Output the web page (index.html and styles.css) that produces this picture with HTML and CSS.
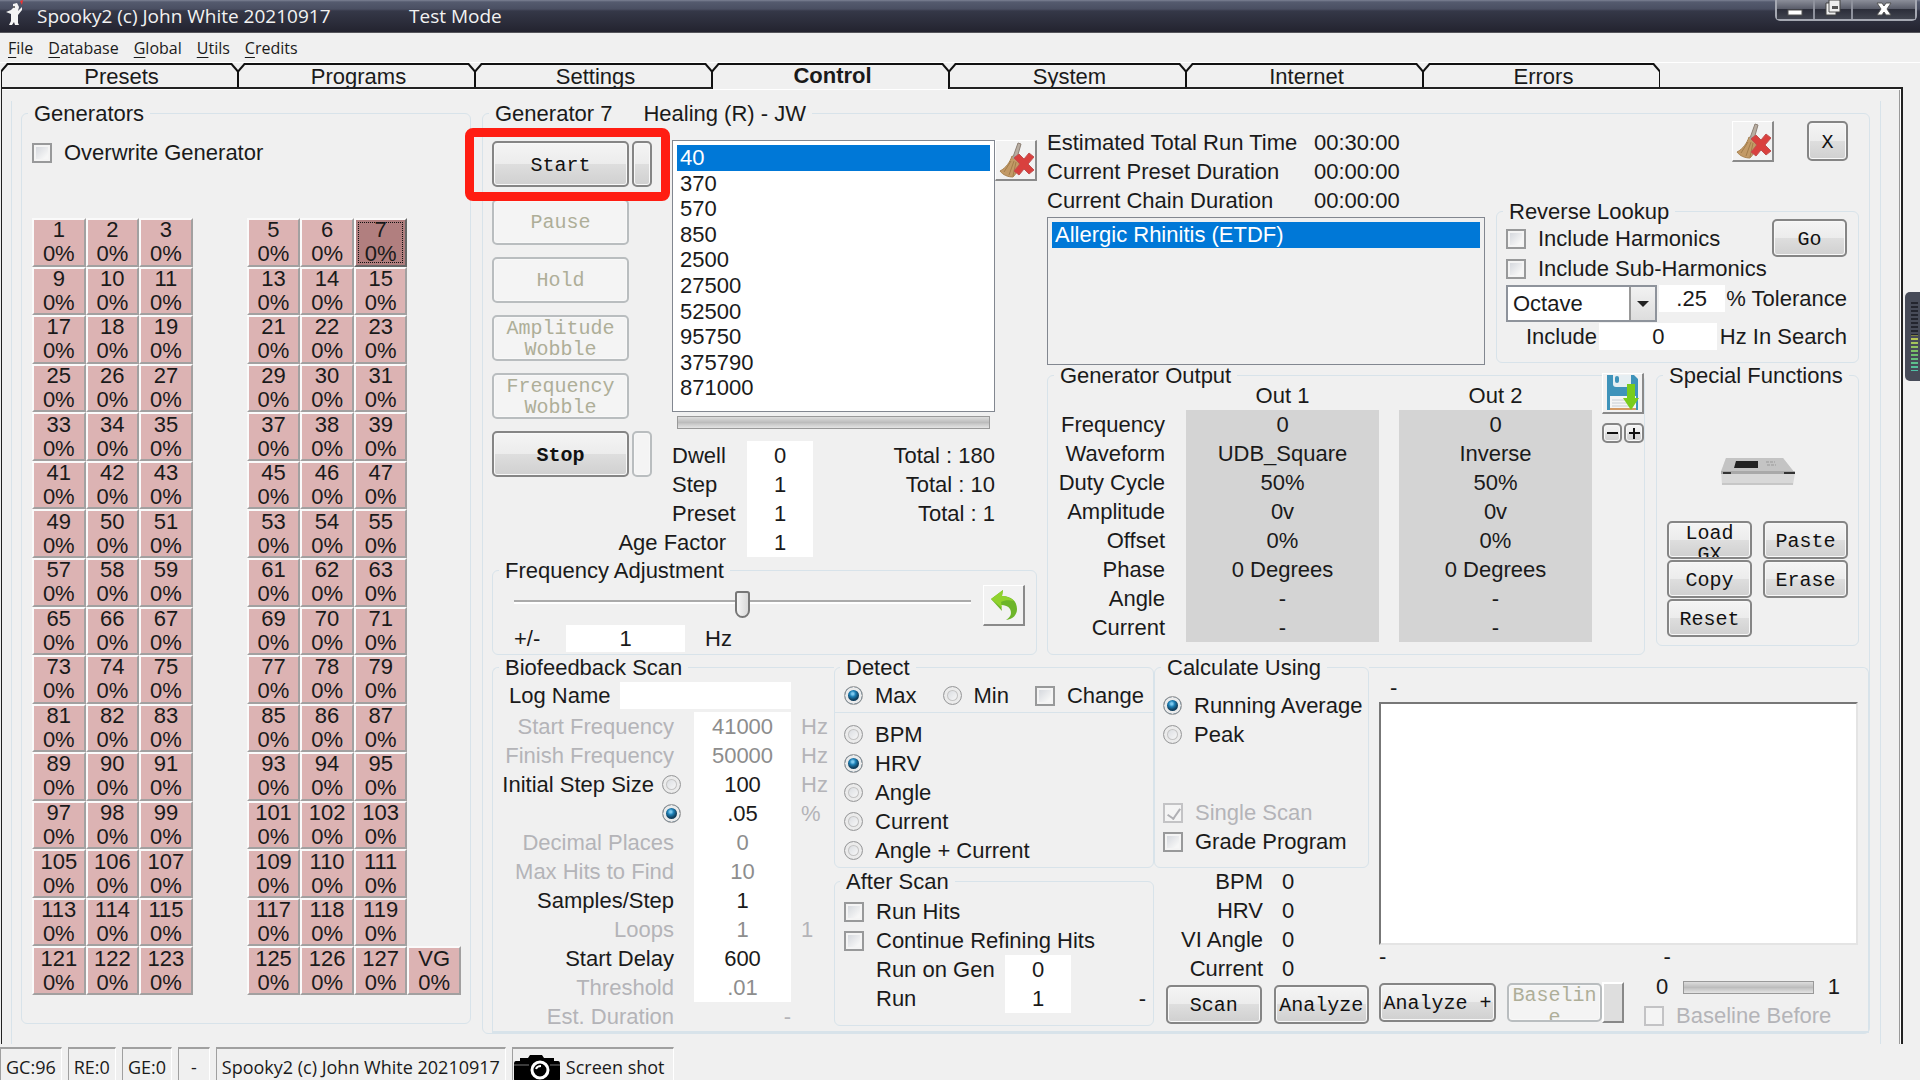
FILE: index.html
```html
<!DOCTYPE html>
<html lang="en">
<head>
<meta charset="utf-8">
<title>Spooky2 (c) John White 20210917</title>
<link rel="stylesheet" href="styles.css">
</head>
<body>
<svg class="defs" aria-hidden="true">
  <symbol id="broom" viewBox="0 0 36 36">
    <path d="M20 1l3 1-4 14-4-1z" fill="#b9aea2" stroke="#8d8176" stroke-width="1"/>
    <path d="M14 14l7 3c1 6-1 13-6 18-5 0-10-2-13-6 6-3 10-9 12-15z" fill="#c39a66" stroke="#a98453" stroke-width="1"/>
    <path d="M13 19l-7 11M16 19l-5 14M18 20l-3 14" stroke="#a37d4b" stroke-width="1" fill="none"/>
    <path d="M16 13l6 3-1 3-7-3z" fill="#a3a09c"/>
    <path d="M17 15l4-3 5 5 5-6 5 4-6 7 6 6-5 4-5-5-5 6-5-4 6-7-6-6z" fill="#d9403e" stroke="#c05050" stroke-width="1"/>
  </symbol>
</svg>

<header class="titlebar">
  <svg class="mascot" viewBox="0 0 18 26" aria-hidden="true">
    <path d="M7 4l4-1 2 4-1 4 4-4v3l-4 5v8l1 2H9l-1-3-2 3H3l2-4v-7l-5-2 5-2 2-2z" fill="#f4f4f4"/>
    <path d="M14 1l3-1-1 5z" fill="#e33"/>
    <circle cx="8" cy="7" r="1" fill="#444"/>
  </svg>
  <span class="title-name">Spooky2 (c) John White 20210917</span>
  <span>Test Mode</span>
  <div class="window-buttons">
    <button aria-label="Minimize"><svg width="16" height="18" viewBox="0 0 16 18"><rect x="1" y="10" width="14" height="5" fill="#fff" stroke="#555"/></svg></button>
    <button aria-label="Restore"><svg width="18" height="18" viewBox="0 0 18 18"><path d="M5 0h11v12h-4v3H2V3h3z" fill="#eee" stroke="#444"/><rect x="8" y="6" width="6" height="3" fill="#555"/><path d="M5 3v9h7" stroke="#555" fill="none"/></svg></button>
    <button class="wide" aria-label="Close"><svg width="16" height="18" viewBox="0 0 16 18"><path d="M1 3h5l2 3 2-3h5l-4 6 4 6h-5l-2-3-2 3H1l4-6z" fill="#fff" stroke="#555"/></svg></button>
  </div>
</header>

<nav class="menu">
  <a href="#"><u>F</u>ile</a><a href="#"><u>D</u>atabase</a><a href="#"><u>G</u>lobal</a><a href="#"><u>U</u>tils</a><a href="#"><u>C</u>redits</a>
</nav>

<div class="tabs" role="tablist">
  <button role="tab">Presets</button><button role="tab">Programs</button><button role="tab">Settings</button><button role="tab" class="active" aria-selected="true">Control</button><button role="tab">System</button><button role="tab">Internet</button><button role="tab">Errors</button>
</div>

<main class="panel">
 <div class="frame">
  <fieldset class="generators">
    <legend>Generators</legend>
    <label class="check"><input type="checkbox">Overwrite Generator</label>
    <div class="banks">
      <div class="bank bank-left" id="bank-left"></div>
      <div class="bank bank-right" id="bank-right"></div>
    </div>
  </fieldset>

  <fieldset class="control">
    <legend><span>Generator 7</span><span>Healing (R) - JW</span></legend>

    <div class="upper">
      <div class="run">
        <div class="run-row">
          <div class="actions">
            <div class="pair"><button class="btn">Start</button><button class="btn side" aria-label="Start all"></button>
              <div class="highlight"></div></div>
            <div class="pair"><button class="btn" disabled>Pause</button></div>
            <div class="pair"><button class="btn" disabled>Hold</button></div>
            <div class="pair"><button class="btn" disabled>Amplitude<br>Wobble</button></div>
            <div class="pair"><button class="btn" disabled>Frequency<br>Wobble</button></div>
            <div class="pair"><button class="btn strong">Stop</button><button class="btn side" aria-label="Stop all" disabled></button></div>
          </div>
          <div class="queue">
            <ul class="listbox frequencies">
              <li class="selected">40</li><li>370</li><li>570</li><li>850</li><li>2500</li><li>27500</li><li>52500</li><li>95750</li><li>375790</li><li>871000</li>
            </ul>
            <div class="bar"></div>
            <div class="counters">
              <label for="dwell">Dwell</label><input id="dwell" value="0"><span>Total : 180</span>
              <label for="step">Step</label><input id="step" value="1"><span>Total : 10</span>
              <label for="preset">Preset</label><input id="preset" value="1"><span>Total : 1</span>
              <label for="age" class="end">Age Factor</label><input id="age" value="1"><span></span>
            </div>
          </div>
          <button class="tool" aria-label="Clear frequencies"><svg width="36" height="36"><use href="#broom"/></svg></button>
        </div>
        <fieldset class="adjust">
          <legend>Frequency Adjustment</legend>
          <div class="adjust-main">
            <input type="range" min="0" max="100" value="50" aria-label="Frequency adjustment">
            <div class="adjust-row"><label for="adj">+/-</label><input id="adj" value="1"><span>Hz</span></div>
          </div>
          <button class="tool" aria-label="Reset adjustment">
            <svg width="32" height="34" viewBox="0 0 32 34"><path d="M3 11L15 2l-1 6c9 0 15 5 15 13 0 6-4 10-11 11 5-3 6-7 4-11-2-3-5-4-9-4l1 6z" fill="#6db52a"/><path d="M3 11L15 2l-1 6c5 0 9 2 12 5-5-1-9-1-13 1l1 6z" fill="#90d22d"/></svg>
          </button>
        </fieldset>
      </div>

      <div class="details">
        <div class="details-top">
          <div class="program">
            <dl class="times">
              <dt>Estimated Total Run Time</dt><dd>00:30:00</dd>
              <dt>Current Preset Duration</dt><dd>00:00:00</dd>
              <dt>Current Chain Duration</dt><dd>00:00:00</dd>
            </dl>
            <ul class="listbox programs"><li class="selected">Allergic Rhinitis (ETDF)</li></ul>
          </div>
          <div class="lookup-col">
            <div class="corner">
              <button class="tool" aria-label="Clear program"><svg width="36" height="36"><use href="#broom"/></svg></button>
              <button class="btn square">X</button>
            </div>
            <fieldset class="lookup">
              <legend>Reverse Lookup</legend>
              <div class="lookup-head">
                <div>
                  <label class="check"><input type="checkbox">Include Harmonics</label>
                  <label class="check"><input type="checkbox">Include Sub-Harmonics</label>
                </div>
                <button class="btn go">Go</button>
              </div>
              <div class="lookup-row">
                <span class="select"><select aria-label="Mode"><option>Octave</option></select></span>
                <input id="tol" class="tol" value=".25"><label for="tol">% Tolerance</label>
              </div>
              <div class="lookup-row include">
                <label for="inc">Include</label><input id="inc" value="0"><span>Hz In Search</span>
              </div>
            </fieldset>
          </div>
        </div>
        <div class="details-bottom">
          <fieldset class="output">
            <legend>Generator Output</legend>
            <table>
              <thead><tr><th></th><th>Out 1</th><th class="gap"></th><th>Out 2</th></tr></thead>
              <tbody>
                <tr><th>Frequency</th><td>0</td><td class="gap"></td><td>0</td></tr>
                <tr><th>Waveform</th><td>UDB_Square</td><td class="gap"></td><td>Inverse</td></tr>
                <tr><th>Duty Cycle</th><td>50%</td><td class="gap"></td><td>50%</td></tr>
                <tr><th>Amplitude</th><td>0v</td><td class="gap"></td><td>0v</td></tr>
                <tr><th>Offset</th><td>0%</td><td class="gap"></td><td>0%</td></tr>
                <tr><th>Phase</th><td>0 Degrees</td><td class="gap"></td><td>0 Degrees</td></tr>
                <tr><th>Angle</th><td>-</td><td class="gap"></td><td>-</td></tr>
                <tr><th>Current</th><td>-</td><td class="gap"></td><td>-</td></tr>
              </tbody>
            </table>
            <div class="output-tools">
              <button class="tool" aria-label="Save">
                <svg width="36" height="36" viewBox="0 0 36 36"><path d="M2 0h27l4 4v31H2z" fill="#3f93ba"/><path d="M8 0h18v9q0 3-3 3H11q-3 0-3-3z" fill="#e6eef2"/><rect x="10" y="1" width="4" height="7" rx="2" fill="#3f93ba"/><path d="M5 21h26v13H5z" fill="#f5f5f5"/><path d="M7 25h20M7 28h20M7 31h20" stroke="#c9ced3"/><path d="M5 34h26" stroke="#d49a63" stroke-width="2"/><path d="M22 9h8v14h4l-8 12-8-12h4z" fill="#79cc1c"/></svg>
              </button>
              <div class="zoomers"><button class="btn" aria-label="Less"><svg width="13" height="13"><path d="M1 6h11" stroke="#111" stroke-width="2"/></svg></button><button class="btn" aria-label="More"><svg width="13" height="13"><path d="M1 6h11M6 1v11" stroke="#111" stroke-width="2"/></svg></button></div>
            </div>
          </fieldset>
          <fieldset class="special">
            <legend>Special Functions</legend>
            <svg class="device" width="76" height="28" viewBox="0 0 76 28" aria-hidden="true"><path d="M6 0h57l12 15-2 12H2L1 13z" fill="#d8d8d8"/><path d="M6 0h57l11 14H1z" fill="#c4c4c4"/><path d="M16 3h22v7H14z" fill="#222"/><path d="M1 13h74l-1 3H1z" fill="#a9a9a9"/><path d="M3 15h8M64 15h11" stroke="#333" stroke-width="2"/><path d="M46 4h9M47 7h9" stroke="#999" stroke-dasharray="3 1"/><path d="M2 26h71" stroke="#b5b5b5"/></svg>
            <div class="special-grid">
              <button class="btn clip">Load GX</button><button class="btn">Paste</button>
              <button class="btn">Copy</button><button class="btn">Erase</button>
              <button class="btn">Reset</button>
            </div>
          </fieldset>
        </div>
      </div>
    </div>

    <div class="scan">
      <fieldset class="bio">
        <legend>Biofeedback Scan</legend>
        <div class="log"><label for="log">Log Name</label><input id="log"></div>
        <div class="params">
          <label class="off" for="p1">Start Frequency</label><input id="p1" value="41000" disabled><span class="off">Hz</span>
          <label class="off" for="p2">Finish Frequency</label><input id="p2" value="50000" disabled><span class="off">Hz</span>
          <span class="with-radio"><label for="p3">Initial Step Size</label><input type="radio" name="stepkind" aria-label="Step in Hz"></span><input id="p3" value="100"><span class="off">Hz</span>
          <span class="with-radio"><input type="radio" name="stepkind" aria-label="Step in percent" checked></span><input aria-label="Step percent" value=".05"><span class="off">%</span>
          <label class="off" for="p5">Decimal Places</label><input id="p5" value="0" disabled><span></span>
          <label class="off" for="p6">Max Hits to Find</label><input id="p6" value="10" disabled><span></span>
          <label for="p7">Samples/Step</label><input id="p7" value="1"><span></span>
          <label class="off" for="p8">Loops</label><input id="p8" value="1" disabled><span class="off">1</span>
          <label for="p9">Start Delay</label><input id="p9" value="600"><span></span>
          <label class="off" for="p10">Threshold</label><input id="p10" value=".01" disabled><span></span>
          <span class="caption off">Est. Duration</span><span class="duration off">-</span><span></span>
        </div>
      </fieldset>

      <div class="detect-col">
        <fieldset class="detect">
          <legend>Detect</legend>
          <div class="extremes">
            <label class="check"><input type="radio" name="extreme" checked>Max</label>
            <label class="check"><input type="radio" name="extreme">Min</label>
            <label class="check"><input type="checkbox">Change</label>
          </div>
          <div class="stack">
            <label class="check"><input type="radio" name="kind">BPM</label>
            <label class="check"><input type="radio" name="kind" checked>HRV</label>
            <label class="check"><input type="radio" name="kind">Angle</label>
            <label class="check"><input type="radio" name="kind">Current</label>
            <label class="check"><input type="radio" name="kind">Angle + Current</label>
          </div>
        </fieldset>
        <fieldset class="after">
          <legend>After Scan</legend>
          <label class="check"><input type="checkbox">Run Hits</label>
          <label class="check"><input type="checkbox">Continue Refining Hits</label>
          <div class="after-grid">
            <label for="rg">Run on Gen</label><input id="rg" value="0"><span></span>
            <label for="rn">Run</label><input id="rn" value="1"><span>-</span>
          </div>
        </fieldset>
      </div>

      <div class="calc-col">
        <fieldset class="calc">
          <legend>Calculate Using</legend>
          <label class="check"><input type="radio" name="calc" checked>Running Average</label>
          <label class="check"><input type="radio" name="calc">Peak</label>
          <label class="check off spaced"><input type="checkbox" checked disabled>Single Scan</label>
          <label class="check"><input type="checkbox">Grade Program</label>
        </fieldset>
        <dl class="stats">
          <dt>BPM</dt><dd>0</dd><dt>HRV</dt><dd>0</dd><dt>VI Angle</dt><dd>0</dd><dt>Current</dt><dd>0</dd>
        </dl>
        <div class="buttons"><button class="btn">Scan</button><button class="btn">Analyze</button></div>
      </div>

      <div class="chart-col">
        <div class="chart-title">-</div>
        <div class="chart"></div>
        <div class="chart-notes"><span>-</span><span>-</span></div>
        <div class="chart-foot">
          <button class="btn plus">Analyze +</button>
          <button class="btn baseline" disabled>Baseline</button>
          <button class="raised" aria-label="Baseline option"></button>
          <div class="before">
            <div class="level"><span>0</span><div class="bar"></div><span>1</span></div>
            <label class="check off"><input type="checkbox" disabled>Baseline Before</label>
          </div>
        </div>
      </div>
    </div>
  </fieldset>
 </div>
</main>

<footer class="status">
  <span>GC:96</span><span>RE:0</span><span>GE:0</span><span class="dash">-</span><span class="name">Spooky2 (c) John White 20210917</span>
  <button class="shot"><svg width="46" height="26" viewBox="0 0 46 26" aria-hidden="true"><path d="M16 0h12l2 3h10v3h4q2 0 2 3v15q0 2-2 2H2q-2 0-2-2V9q0-3 2-3h4V3h8z" fill="#000"/><path d="M0 10h15M36 10h10" stroke="#777"/><circle cx="26" cy="15" r="8" fill="#000" stroke="#fff" stroke-width="3"/><path d="M22 14q1-3 5-3" stroke="#fff" stroke-width="2" fill="none"/></svg>Screen shot</button>
</footer>

<div class="meter" aria-hidden="true"><div class="meter-bars"></div></div>
<script src="script.js"></script>
</body>
</html>
```
FILE: script.js
```js
// Fills the two generator banks, eight generators per row; the fourth column is hidden except for VG.
function addGenerator(bank, name) {
  const button = document.createElement('button');
  button.className = name === '7' ? 'gen current' : 'gen';
  button.innerHTML = name + '<br>0%';
  bank.appendChild(button);
}
const left = document.getElementById('bank-left');
const right = document.getElementById('bank-right');
for (let row = 0; row < 16; row++) {
  for (let col = 1; col <= 3; col++) {
    addGenerator(left, String(row * 8 + col));
    addGenerator(right, String(row * 8 + col + 4));
  }
  if (row < 15) right.appendChild(document.createElement('span'));
}
addGenerator(right, 'VG');
```
FILE: styles.css
```css
* { box-sizing: border-box; }
body {
  margin: 0; min-height: 100vh; display: flex; flex-direction: column;
  background: #f0f0f0; color: #1a1a1a;
  font: 22px/24px "Liberation Sans", Arial, sans-serif;
  white-space: nowrap; overflow-x: hidden;
}
button, input, select { font: inherit; color: inherit; margin: 0; padding: 0; }
button { cursor: default; }
ul, dl, dd { margin: 0; padding: 0; list-style: none; }
.defs { display: none; }
svg { display: block; flex: none; }

/* title bar */
.titlebar {
  height: 33px; display: flex; align-items: center; gap: 8px; padding-left: 6px;
  font: 19px/24px "Open Sans", "Noto Sans", sans-serif; color: #f2f2f2;
  background: linear-gradient(#7d8294 0, #545a6e 2px, #4a4f62 9px, #353848 11px, #23232f 32px, #888 33px);
}
.mascot { width: 18px; height: 26px; align-self: flex-start; }
.titlebar > span { margin-bottom: 2px; }
.title-name { margin-left: 5px; flex: 0 0 364px; }
.window-buttons { margin-left: auto; margin-right: 3px; align-self: flex-start; display: flex; border: 2px solid #a5a8b2; border-top: 0; border-radius: 0 0 5px 5px; }
.window-buttons button { width: 38px; height: 19px; border: 0; border-right: 2px solid #8f929d; background: linear-gradient(#8b8e99, #5b5e6b 45%, #2c2e3a 50%, #41444f); display: flex; justify-content: center; }
.window-buttons .wide { width: 62px; border-right: 0; }

/* menu and tabs */
.menu { height: 30px; padding: 0 8px; display: flex; align-items: center; gap: 15px; font: 16px/24px "Open Sans", "Noto Sans", sans-serif; border-bottom: 1px solid #fff; }
.menu a { color: #1a1a1a; text-decoration: none; }
.menu u { text-underline-offset: 3px; }
.tabs { display: flex; margin: 0 260px 0 1px; }
.tabs button {
  flex: 1 1 0; height: 24px; border: 0; padding: 2px 0 0 4px; background: #111; position: relative; isolation: isolate;
  clip-path: polygon(0 100%, 0 7px, 6px 0, calc(100% - 6px) 0, 100% 7px, 100% 100%);
}
.tabs button::before {
  content: ""; position: absolute; inset: 2px 1px 0; z-index: -1; background: #f0f0f0;
  clip-path: polygon(0 100%, 0 7px, 6px 0, calc(100% - 6px) 0, 100% 7px, 100% 100%);
}
.tabs .active { font-weight: bold; height: 26px; padding-top: 0; margin-bottom: -2px; z-index: 1; }

.panel { flex: 1; margin: 0 17px 3px 1px; border: solid #222; border-width: 2px 2px 0 1px; box-shadow: inset -2px 2px 0 -1px #fff, inset -2px 0 0 #999; display: flex; }
.frame { flex: 1; margin: 12px 20px 0 9px; padding: 0 11px 10px 9px; border: solid #d8e3ea; border-width: 0 1px; display: grid; grid-template-columns: 450fr 1387fr; gap: 11px; }

fieldset { margin: 0; padding: 0; min-width: 0; border: 1px solid #d8e3ea; border-radius: 6px; }
legend { margin-left: 6px; padding: 0 6px; height: 24px; line-height: 26px; }
.off { color: #b4b4b8; }

/* shared controls */
.btn {
  font: 20px/22px "Liberation Mono", "Courier New", monospace; color: #111;
  padding: 3px 0 0; border: 2px solid #858585; border-radius: 5px; overflow: hidden; white-space: normal;
  background: linear-gradient(#f4f4f4, #ececec 49%, #dedede 50%, #d0d0d0);
  box-shadow: inset 0 0 0 1px #f8f8f8;
}
.btn:disabled { color: #aeae98; border-color: #b9bdbf; background: #f4f4f4; }
.strong { font-weight: bold; }
.tool { width: 42px; height: 41px; flex: none; display: flex; align-items: center; justify-content: center; background: #f2f2f2; border: solid; border-width: 1px 2px 2px 1px; border-color: #fff #8a8a8a #8a8a8a #fff; }
.check { display: flex; align-items: center; gap: 12px; height: 29px; }
input { border: 0; border-radius: 0; outline: 0; background: #fff; text-align: center; min-width: 0; height: 27px; }
input:disabled { color: #8d8d8d; }
input[type=checkbox], input[type=radio] { appearance: none; flex: none; width: 20px; height: 20px; border: 2px solid #98999a; background: linear-gradient(135deg, #cfd3d9, #f6f6f6 75%); box-shadow: inset 0 0 0 2px #f4f4f4; }
input[type=radio] { width: 19px; height: 19px; border-radius: 50%; border-width: 1px; box-shadow: inset 0 0 0 3px #ebebeb, inset 0 0 0 4px #c4c4c4; }
input[type=radio]:checked { background: radial-gradient(circle at 45% 40%, #7cc8ee 0 1px, #1c7fb5 3px, #12405f 6px); box-shadow: inset 0 0 0 3px #ebebeb; }
input[type=checkbox]:disabled { border-color: #c3c3c5; background: #f4f4f4; }
input[type=checkbox]:disabled:checked { position: relative; }
input[type=checkbox]:disabled:checked::after { content: ""; position: absolute; left: 5px; top: 1px; width: 6px; height: 11px; border: solid #b0b0b4; border-width: 0 2px 2px 0; transform: rotate(35deg); }
.bar { height: 13px; border: 1px solid #999; background: linear-gradient(#ddd, #bcbcbc 50%, #c6c6c6 60%, #e4e4e4); }
.listbox { border: 1px solid #828790; padding: 4px; background: #fff; }
.listbox li { padding-left: 3px; line-height: 26px; }
.listbox .selected { background: #0078d7; color: #fff; }

/* generator banks */
.generators { margin-bottom: 10px; padding: 0 9px 28px 10px; display: flex; flex-direction: column; }
.generators > legend { margin-left: -4px; }
.generators > .check { height: 24px; margin: 16px 0 53px; }
.banks { flex: 1; display: flex; gap: 54px; }
.bank { display: grid; grid-auto-rows: minmax(48px, 1fr); }
.bank-left { flex: 3; grid-template-columns: repeat(3, 1fr); }
.bank-right { flex: 4; grid-template-columns: repeat(4, 1fr); }
.gen { contain: size; border: 2px solid; border-color: #fafafa #a2a0a0 #a2a0a0 #fafafa; background: #dcb3b3; line-height: 24px; padding: 0; display: flex; align-items: center; justify-content: center; text-align: center; }
.gen.current { background: #b17f7f; border-color: #fafafa #666 #666 #fafafa; outline: 1px dotted #111; outline-offset: -5px; }

/* control page */
.control { display: flex; flex-direction: column; padding-left: 9px; margin-right: -1px; }
.control > legend { margin-left: -3px; }
.control > legend span + span { margin-left: 31px; }
.upper { display: grid; grid-template-columns: 545fr 812fr; gap: 10px; margin-right: 10px; height: 530px; }
.run { display: flex; flex-direction: column; justify-content: space-between; padding-top: 15px; }
.run-row { display: flex; }
.actions { width: 160px; margin: 1px 20px 0 0; display: flex; flex-direction: column; gap: 12px; }
.pair { display: flex; gap: 3px; height: 46px; position: relative; }
.pair .btn { width: 137px; }
.pair .side { width: 20px; }
.pair .btn:disabled { line-height: 21px; padding-top: 1px; }
.highlight { position: absolute; inset: -13px -18px -14px -27px; border: 9px solid #ff1d12; border-radius: 8px; pointer-events: none; z-index: 2; }
.queue { flex: 1; display: flex; flex-direction: column; }
.frequencies { height: 272px; padding-bottom: 10px; display: grid; grid-template-rows: repeat(10, minmax(0, 1fr)); }
.queue .bar { margin: 4px 5px 12px; }
.counters { display: grid; grid-template-columns: 54px 66px 1fr; column-gap: 21px; grid-auto-rows: 29px; align-items: center; }
.counters input { height: 29px; }
.counters span { text-align: right; }
.counters .end { justify-self: end; }
.adjust { display: flex; justify-content: space-between; height: 97px; padding: 0 11px 0 21px; }
.adjust > legend { margin-left: -15px; }
.adjust-main { flex: 1; margin-right: 12px; }
.adjust-row { display: flex; align-items: center; }
.adjust-row label { width: 52px; }
.adjust-row input { width: 119px; margin-right: 20px; }
.adjust .tool { margin-top: 3px; }
input[type=range] { appearance: none; display: block; width: 100%; height: 28px; margin: 8px 0 7px; background: linear-gradient(#aaa, #aaa) 0 10px / 100% 2px no-repeat, linear-gradient(#fff, #fff) 0 12px / 100% 2px no-repeat; }
input[type=range]::-webkit-slider-thumb { appearance: none; width: 15px; height: 27px; background: linear-gradient(90deg, #f5f5f5, #d9d9d9); border: 2px solid #777; border-radius: 3px 3px 8px 8px; }

.details { display: flex; flex-direction: column; min-width: 0; }
.details-top { display: flex; gap: 11px; height: 238px; }
.program { flex: 438; display: flex; flex-direction: column; }
.times { display: grid; grid-template-columns: 267px 1fr; grid-auto-rows: 29px; align-items: center; margin: 3px 0 2px; }
.programs { flex: 1; background: #f0f0f0; margin-bottom: -2px; }
.lookup-col { flex: 363; display: flex; flex-direction: column; }
.corner { display: flex; justify-content: flex-end; gap: 33px; margin: -4px 11px 0 0; height: 78px; }
.square { width: 41px; height: 40px; }
.lookup { flex: 1; padding: 0 11px 0 9px; }
.lookup legend { margin-left: -3px; }
.lookup .check { height: 30px; }
.lookup-head { display: flex; justify-content: space-between; margin: 1px 0; }
.go { width: 75px; height: 38px; margin-top: -5px; margin-left: -60px; }
.lookup-row { display: flex; align-items: flex-start; justify-content: space-between; line-height: 27px; }
.lookup-head + .lookup-row { height: 38px; }
.select { position: relative; width: 151px; height: 37px; border: 2px solid #8e939b; background: #fff; flex: none; }
.select select { appearance: none; border: 0; background: none; width: 100%; height: 33px; padding-left: 5px; }
.select::after { content: ""; position: absolute; right: 0; top: 0; width: 24px; height: 33px; border-left: 2px solid #999; background: linear-gradient(#f2f2f2, #ddd); pointer-events: none; }
.select::before { content: ""; position: absolute; right: 6px; top: 14px; border: 6px solid transparent; border-top-color: #222; border-bottom: 0; z-index: 1; pointer-events: none; }
.tol { width: 66px; }
.include { padding-left: 20px; }
.include input { width: 118px; }
.details-bottom { flex: 1; display: grid; grid-template-columns: 598fr 203fr; gap: 11px; }
.output { display: flex; justify-content: space-between; }
.output table { flex: 1; margin-right: 10px; margin-top: -3px; border-collapse: collapse; table-layout: fixed; width: 100%; height: 256px; }
.output th, .output td { padding: 0; height: 29px; font-weight: normal; text-align: center; }
.output th:first-child { width: 138px; text-align: right; padding-right: 21px; }
.output thead th { height: 26px; vertical-align: top; }
.output .gap { width: 20px; background: none; }
.output td { background: #d4d4d4; }
.output-tools { width: 42px; margin-top: -14px; display: flex; flex-direction: column; gap: 9px; }
.zoomers { display: flex; gap: 2px; }
.zoomers .btn { width: 20px; height: 20px; padding: 0; display: flex; align-items: center; justify-content: center; }
.special { margin-bottom: 9px; display: flex; flex-direction: column; align-items: center; padding: 0 10px; }
.special > legend { margin-left: -4px; }
.device { margin: 71px 0 35px; }
.special-grid { display: grid; grid-template-columns: 85px 85px; grid-auto-rows: 38px; column-gap: 11px; row-gap: 1px; }
.special .clip { display: flex; justify-content: center; align-items: flex-start; padding: 0 10px; line-height: 21px; }

/* scan area */
.scan { flex: 1; display: flex; border-bottom: 2px solid #d8e3ea; }
.bio { width: 342px; border-right: 0; border-bottom: 0; border-radius: 6px 0 0 0; }
.log { display: flex; align-items: center; height: 33px; padding: 0 43px 0 16px; gap: 9px; }
.log input { flex: 1; text-align: left; }
.params { display: grid; grid-template-columns: 201px 97px 1fr; grid-auto-rows: 29px; align-items: center; }
.params > label, .params > .caption { text-align: right; padding-right: 20px; }
.params > input { height: 29px; }
.params > span:nth-child(3n) { padding-left: 10px; }
.params > .with-radio { padding-right: 13px; }
.with-radio { display: flex; align-items: center; justify-content: flex-end; gap: 8px; }
.duration { text-align: right; }
.detect-col { width: 320px; display: flex; flex-direction: column; }
.detect { height: 213px; }
.extremes { display: flex; justify-content: space-between; height: 34px; padding: 2px 9px 0 9px; border-bottom: 1px solid #d8e3ea; }
.stack { padding: 7px 9px; }
.after { margin-top: 1px; height: 157px; padding: 0 7px 0 9px; }
.detect > legend { margin-left: 5px; }
.after > legend { margin-left: -4px; }
.after > .check:nth-child(2) { margin-top: 4px; }
.after-grid { display: grid; grid-template-columns: 129px 66px 1fr; grid-auto-rows: 29px; align-items: center; padding-left: 32px; }
.after-grid input { height: 29px; }
.after-grid span { text-align: right; }
.calc-col { width: 215px; }
.calc { height: 213px; padding-left: 8px; }
.calc > legend { margin-left: -2px; }
.calc > legend + .check { margin-top: 12px; }
.calc .spaced { margin-top: 49px; }
.stats { display: grid; grid-template-columns: 109px 1fr; column-gap: 19px; grid-auto-rows: 29px; align-items: center; margin-top: -1px; }
.stats dt { text-align: right; }
.buttons { display: flex; gap: 12px; padding-left: 12px; }
.buttons .btn { flex: 1; height: 39px; margin-top: 2px; }
.chart-col { flex: 1; margin-top: 12px; padding: 8px 10px 0; border: solid #d8e3ea; border-width: 1px 1px 0 0; border-radius: 0 6px 0 0; display: flex; flex-direction: column; }
.chart-title { padding-left: 11px; height: 26px; }
.chart { flex: 1; background: #fff; border: 2px solid; border-color: #777 #e4e4e4 #e4e4e4 #777; }
.chart-notes { display: grid; grid-template-columns: 285fr 195fr; height: 28px; }
.chart-foot { display: flex; align-items: flex-start; height: 58px; }
.chart-foot .btn { height: 39px; margin-top: 10px; flex: none; }
.plus { width: 117px; margin-right: 11px; }
.chart-foot .baseline { width: 95px; padding: 0; word-break: break-all; display: flex; justify-content: center; align-items: flex-start; text-align: center; }
.raised { width: 22px; height: 41px; margin-top: 9px; margin-right: 20px; background: #dedede; border: 2px solid; border-color: #fff #888 #888 #fff; }
.before { flex: 1; }
.level { display: flex; justify-content: space-between; align-items: center; height: 28px; padding: 0 18px 0 12px; }
.level .bar { width: 131px; }

/* status bar */
.status { display: flex; gap: 6px; height: 33px; font: 18px/24px "Open Sans", "Noto Sans", sans-serif; }
.status > * { border: solid #a0a0a0; border-width: 2px 0 0 1px; border-right: 1px solid #fff; padding: 6px 5px 0; }
.status .dash { padding: 6px 12px 0; }
.shot { background: none; display: flex; gap: 6px; }
.status .shot { padding: 6px 8px 0 1px; }

.meter { position: fixed; right: 0; top: 292px; width: 15px; height: 89px; background: #474b58; border-radius: 5px 0 0 5px; padding: 10px 2px 10px 6px; }
.meter-bars { height: 100%; background: repeating-linear-gradient(transparent 0 2px, #474b58 2px 4px), linear-gradient(#23252e 48%, #c8c850 49%, #6fc06a 75%, #4fc0a8); }
```
